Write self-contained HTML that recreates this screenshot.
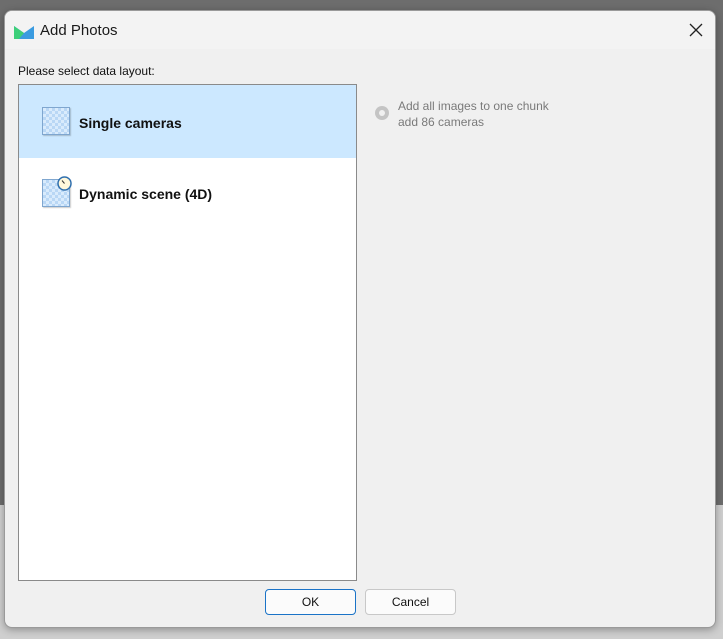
<!DOCTYPE html>
<html><head><style>
body{margin:0;width:723px;height:639px;position:relative;overflow:hidden;background:#6d6d6d;font-family:"Liberation Sans",sans-serif}
.bot{position:absolute;left:0;top:505px;width:723px;height:134px;background:#cfcfcf}
.win{position:absolute;left:4px;top:10px;width:712px;height:618px;background:#f0f0f0;border-radius:8px;border:1px solid #9a9a9a;box-sizing:border-box;overflow:hidden;box-shadow:0 2px 8px rgba(0,0,0,.3)}
.title{height:38px;background:#f3f3f3;position:relative}
.title span{position:absolute;left:35px;top:11px;font-size:15px;color:#1a1a1a}
.lbl{position:absolute;left:13px;top:53px;font-size:12px;color:#111}
.list{position:absolute;left:13px;top:73px;width:339px;height:497px;background:#fff;border:1px solid #8a8a8a;box-sizing:border-box}
.sel{position:absolute;left:0;top:0;width:337px;height:73px;background:#cce8ff}
.ic{position:absolute;width:28px;height:28px;border:1px solid #7fa6cf;background:
repeating-conic-gradient(#b9d7f5 0 25%,#d9ebfc 0 50%) 0 0/6px 6px;box-sizing:border-box;box-shadow:1px 1px 1px rgba(0,0,0,.2)}
.it{position:absolute;left:60px;font-size:14px;font-weight:bold;color:#111}
.rad{position:absolute;left:370px;top:95px;width:14px;height:14px;border-radius:50%;background:#c4c4c4}
.rad::after{content:"";position:absolute;left:4px;top:4px;width:6px;height:6px;border-radius:50%;background:#f0f0f0}
.rt{position:absolute;left:393px;top:87px;font-size:12px;color:#7a7a7a;line-height:16px}
.btn{position:absolute;top:578px;width:91px;height:26px;border:1px solid #c8c8c8;border-radius:4px;background:#fbfbfb;font-size:12px;text-align:center;line-height:24px;box-sizing:border-box;color:#111}
</style></head><body>
<div class="bot"></div>
<div class="win">
<div class="title">
<svg style="position:absolute;left:9px;top:13px" width="20" height="16"><path d="M0 2 L10 9 L20 2 V15 H0Z" fill="#3a9be0"/><path d="M0 2 L10 9 L5 15 H0Z" fill="#3dcf7a"/></svg>
<span>Add Photos</span>
<svg style="position:absolute;left:684px;top:12px" width="14" height="14"><path d="M1 1L13 13M13 1L1 13" stroke="#222" stroke-width="1.3"/></svg>
</div>
<div class="lbl">Please select data layout:</div>
<div class="list">
<div class="sel"></div>
<div class="ic" style="left:23px;top:22px"></div>
<div class="it" style="top:30px">Single cameras</div>
<div class="ic" style="left:23px;top:94px"></div>
<svg style="position:absolute;left:38px;top:91px" width="15" height="15"><circle cx="7.5" cy="7.5" r="6.5" fill="#fff8dc" stroke="#2f6fae" stroke-width="1.5"/><path d="M7.5 7.5L5 4.5" stroke="#333"/></svg>
<div class="it" style="top:101px">Dynamic scene (4D)</div>
</div>
<div class="rad"></div>
<div class="rt">Add all images to one chunk<br>add 86 cameras</div>
<div class="btn" style="left:260px;border-color:#1a73c7">OK</div>
<div class="btn" style="left:360px">Cancel</div>
</div>
</body></html>
